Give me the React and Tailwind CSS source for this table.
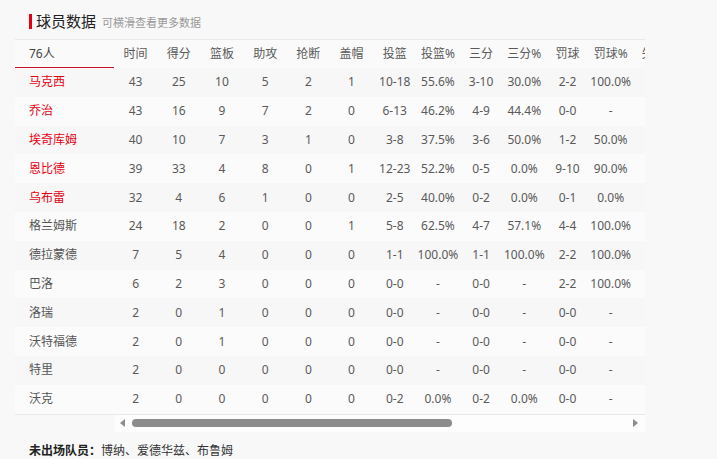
const cols = ['时间', '得分', '篮板', '助攻', '抢断', '盖帽', '投篮', '投篮%', '三分', '三分%', '罚球', '罚球%', '失误'];

const players = [
  { name: '马克西', star: true, s: ['43', '25', '10', '5', '2', '1', '10-18', '55.6%', '3-10', '30.0%', '2-2', '100.0%'] },
  { name: '乔治', star: true, s: ['43', '16', '9', '7', '2', '0', '6-13', '46.2%', '4-9', '44.4%', '0-0', '-'] },
  { name: '埃奇库姆', star: true, s: ['40', '10', '7', '3', '1', '0', '3-8', '37.5%', '3-6', '50.0%', '1-2', '50.0%'] },
  { name: '恩比德', star: true, s: ['39', '33', '4', '8', '0', '1', '12-23', '52.2%', '0-5', '0.0%', '9-10', '90.0%'] },
  { name: '乌布雷', star: true, s: ['32', '4', '6', '1', '0', '0', '2-5', '40.0%', '0-2', '0.0%', '0-1', '0.0%'] },
  { name: '格兰姆斯', s: ['24', '18', '2', '0', '0', '1', '5-8', '62.5%', '4-7', '57.1%', '4-4', '100.0%'] },
  { name: '德拉蒙德', s: ['7', '5', '4', '0', '0', '0', '1-1', '100.0%', '1-1', '100.0%', '2-2', '100.0%'] },
  { name: '巴洛', s: ['6', '2', '3', '0', '0', '0', '0-0', '-', '0-0', '-', '2-2', '100.0%'] },
  { name: '洛瑞', s: ['2', '0', '1', '0', '0', '0', '0-0', '-', '0-0', '-', '0-0', '-'] },
  { name: '沃特福德', s: ['2', '0', '1', '0', '0', '0', '0-0', '-', '0-0', '-', '0-0', '-'] },
  { name: '特里', s: ['2', '0', '0', '0', '0', '0', '0-0', '-', '0-0', '-', '0-0', '-'] },
  { name: '沃克', s: ['2', '0', '0', '0', '0', '0', '0-2', '0.0%', '0-2', '0.0%', '0-0', '-'] },
];

export default function App() {
  return (
    <div
      className="h-[459px] w-[717px] overflow-hidden bg-[#f8f8f8] text-[12px] text-[#5a5a5a]"
      style={{ fontFamily: '"Noto Sans", "Noto Sans CJK SC", sans-serif' }}
    >
      {/* Title */}
      <div className="flex h-[39px] items-center pl-[29px] pt-[4px]">
        <span className="mr-[4px] h-[15px] w-[3px] bg-[#e60012]" />
        <span className="text-[15px] leading-none text-[#222]">球员数据</span>
        <span className="ml-[6px] pt-[2px] text-[11px] leading-none text-[#999]">可横滑查看更多数据</span>
      </div>

      {/* Table */}
      <div className="ml-[15px] w-[630px] overflow-hidden border-t border-b border-[#e8e8e8] bg-[#fafafa]">
        <div className="flex h-[28px] items-center whitespace-nowrap">
          <div className="flex h-full w-[99px] shrink-0 items-center border-b border-[#c8102e] pl-[14px] text-[#444]">76人</div>
          {cols.map((c) => (
            <div key={c} className="w-[43.2px] shrink-0 text-center">{c}</div>
          ))}
        </div>
        {players.map((p, i) => (
          <div
            key={p.name}
            className={`flex h-[28.8px] items-center whitespace-nowrap ${i % 2 ? 'bg-[#fbfbfb]' : 'bg-[#f7f7f7]'}`}
          >
            <div className={`w-[99px] shrink-0 pl-[14px] ${p.star ? 'text-[#e60012]' : 'text-[#555]'}`}>{p.name}</div>
            {p.s.map((v, j) => (
              <div key={j} className="w-[43.2px] shrink-0 text-center">{v}</div>
            ))}
          </div>
        ))}
      </div>

      {/* Scrollbar */}
      <div className="ml-[115px] flex h-[17px] w-[530px] items-center bg-[#fdfdfd]">
        <span className="ml-[5px] h-0 w-0 border-y-[4px] border-r-[5px] border-y-transparent border-r-[#8c8c8c]" />
        <span className="ml-[7px] h-[8px] w-[320px] rounded-full bg-[#8c8c8c]" />
        <span className="ml-auto mr-[7px] h-0 w-0 border-y-[4px] border-l-[5px] border-y-transparent border-l-[#8c8c8c]" />
      </div>

      {/* Inactive */}
      <div className="mt-[11px] pl-[29px] leading-[16px] text-[#333]">
        <span className="font-bold text-[#222]">未出场队员：</span>
        博纳、爱德华兹、布鲁姆
      </div>
    </div>
  );
}
